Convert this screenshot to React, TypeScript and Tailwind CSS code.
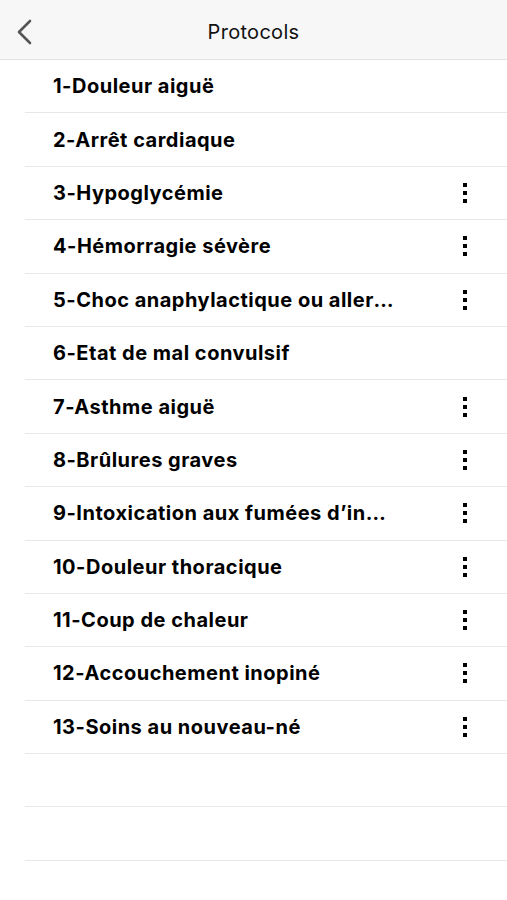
import React from "react";

const items: { label: string; menu: boolean }[] = [
  { label: "1-Douleur aiguë", menu: false },
  { label: "2-Arrêt cardiaque", menu: false },
  { label: "3-Hypoglycémie", menu: true },
  { label: "4-Hémorragie sévère", menu: true },
  { label: "5-Choc anaphylactique ou allergique grave", menu: true },
  { label: "6-Etat de mal convulsif", menu: false },
  { label: "7-Asthme aiguë", menu: true },
  { label: "8-Brûlures graves", menu: true },
  { label: "9-Intoxication aux fumées d’incendie", menu: true },
  { label: "10-Douleur thoracique", menu: true },
  { label: "11-Coup de chaleur", menu: true },
  { label: "12-Accouchement inopiné", menu: true },
  { label: "13-Soins au nouveau-né", menu: true },
  { label: "", menu: false },
  { label: "", menu: false },
];

function Dots() {
  return (
    <div className="flex flex-col items-center gap-[4px]">
      <span className="block w-[4px] h-[4px] bg-black" />
      <span className="block w-[4px] h-[4px] bg-black" />
      <span className="block w-[4px] h-[4px] bg-black" />
    </div>
  );
}

export default function App() {
  return (
    <div
      className="w-[507px] h-[900px] bg-white overflow-hidden"
      style={{ fontFamily: "Inter, 'Liberation Sans', sans-serif" }}
    >
      <div className="h-[60px] bg-[#f7f7f7] border-b border-[#e2e2e2] relative flex items-center justify-center">
        <svg
          className="absolute left-[15px] top-[19px]"
          width="20"
          height="26"
          viewBox="0 0 20 26"
          fill="none"
        >
          <path d="M15 2 L4 13 L15 24" stroke="#555" strokeWidth="2.6" strokeLinecap="round" strokeLinejoin="round" />
        </svg>
        <span className="mt-[4px] text-[20px] text-[#111] tracking-[0.3px]">Protocols</span>
      </div>
      <div className="pl-[25px]">
        {items.map((it, i) => (
          <div
            key={i}
            className="h-[53.4px] border-b border-[#e8e8e8] flex items-center pl-[28px] pr-[40px]"
          >
            <span className="w-[342px] truncate font-bold text-[20px] tracking-[0.5px] text-black">
              {it.label}
            </span>
            <div className="flex-1" />
            {it.menu && <Dots />}
          </div>
        ))}
      </div>
    </div>
  );
}
